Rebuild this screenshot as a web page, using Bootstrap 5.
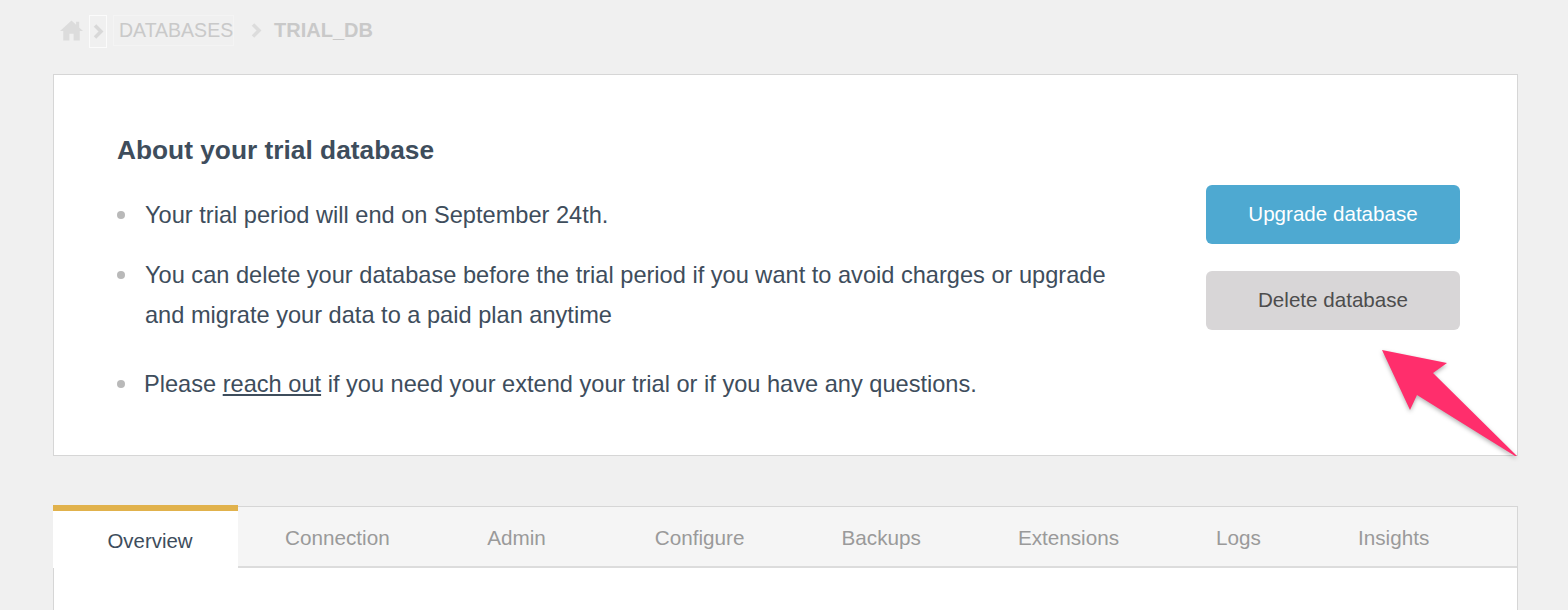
<!DOCTYPE html>
<html lang="en">
<head>
  <meta charset="UTF-8">
  <meta name="viewport" content="width=device-width, initial-scale=1.0">
  <title>Trial database</title>
  <link href="https://cdn.jsdelivr.net/npm/bootstrap@5.3.0/dist/css/bootstrap.min.css" rel="stylesheet">
  <style>
    html, body { height: 610px; overflow: hidden; }
    body {
      background: #f0f0f0;
      font-family: "Liberation Sans", Arial, sans-serif;
      color: #3e4d5c;
      position: relative;
    }
    .page-wrap { padding: 0 50px 0 53px; }
    .crumbs { height: 74px; padding: 15px 0 0 7px; color: #c9c9c9; font-size: 20px; }
    .crumbs .home-icon { width: 23px; height: 22px; margin-top: 4px; }
    .crumb-sep { width: 18px; height: 33px; border: 1px solid #fbfbfb; display: flex; align-items: center; justify-content: center; margin: 0 6px 0 6px; }
    .crumb-link { height: 31px; width: 121px; border: 1px solid #f4f4f4; line-height: 29px; padding-left: 5px; font-size: 19.5px; }
    .crumb-sep2 { margin: 0 12px 0 17px; display: flex; align-items: center; height: 31px; }
    .crumb-now { font-weight: 700; line-height: 30px; }
    .about-box {
      background: #fff;
      border: 1px solid #d6d6d6;
      height: 382px;
      padding: 59px 57px 0 63px;
    }
    .about-box h2 { font-size: 26.3px; font-weight: 700; line-height: 32px; margin-bottom: 29px; color: #3e4d5c; }
    .about-list { list-style: none; margin: 0; padding: 0; width: 1010px; font-size: 23.6px; line-height: 40px; }
    .about-list li { position: relative; padding-left: 28px; margin-bottom: 20px; }
    .about-list li:last-child { margin-top: 29px; margin-bottom: 0; padding-left: 27px; }
    .about-list li::before { content: ""; position: absolute; left: 0; top: 16px; width: 8px; height: 8px; border-radius: 50%; background: #b9b9b9; }
    .about-list a { color: #3e4d5c; }
    .side-btns { width: 254px; padding-top: 51px; gap: 27.5px; }
    .btn-up, .btn-del { height: 58.5px; font-size: 20.6px; border-radius: 6px; border: 0; line-height: 58px; padding: 0; }
    .btn-up { background: #4ea9d1; color: #fff; }
    .btn-del { background: #d8d6d7; color: #4d4d4d; }
    .tab-box {
      margin-top: 50px;
      background: #fff;
      border: 1px solid #d6d6d6;
      border-bottom: 0;
      height: 110px;
    }
    .tab-strip { height: 61px; background: #f5f5f5; border-bottom: 2px solid #dcdcdc; font-size: 20.7px; }
    .tab-item { color: #9a9a9a; padding: 0 48.5px; line-height: 62px; height: 59px; display: block; text-decoration: none; }
    .tab-item.now {
      background: #fff; color: #3e4d5c; width: 185px; height: 63px; padding: 0 0 0 9px; text-align: center; font-size: 20.4px;
      margin: -2px 0 0 -1px; border-top: 6px solid #e1b24c; line-height: 60px;
    }
    .tab-first { margin-left: -1.5px; }
    .tab-admin { margin-left: 0.5px; padding-right: 60.5px; }
    .big-arrow { position: absolute; left: 1370px; top: 340px; width: 160px; height: 125px; overflow: visible; filter: drop-shadow(0 2px 2px rgba(0,0,0,.3)); }
  </style>
</head>
<body>
<div class="page-wrap">
  <nav class="crumbs d-flex align-items-start">
    <svg class="home-icon" viewBox="0 0 24 22"><path fill="#dcdcdc" d="M12 1 0 12h3.400v10h6.400v-7h4.400v7h6.400V12H24l-4-3.700V2.500h-3.200v3.100z"/></svg>
    <span class="crumb-sep"><svg width="11" height="15" viewBox="0 0 11 15"><path fill="none" stroke="#d8d8d8" stroke-width="3.500" d="m2 1.500 6 6-6 6"/></svg></span>
    <span class="crumb-link">DATABASES</span>
    <span class="crumb-sep2"><svg width="11" height="15" viewBox="0 0 11 15"><path fill="none" stroke="#dcdcdc" stroke-width="3.500" d="m2 1.500 6 6-6 6"/></svg></span>
    <span class="crumb-now">TRIAL_DB</span>
  </nav>

  <section class="about-box d-flex justify-content-between">
    <div>
      <h2>About your trial database</h2>
      <ul class="about-list">
        <li>Your trial period will end on September 24th.</li>
        <li>You can delete your database before the trial period if you want to avoid charges or upgrade and migrate your data to a paid plan anytime</li>
        <li>Please <a href="#">reach out</a> if you need your extend your trial or if you have any questions.</li>
      </ul>
    </div>
    <div class="side-btns d-flex flex-column">
      <a href="#" class="btn btn-up">Upgrade database</a>
      <a href="#" class="btn btn-del">Delete database</a>
    </div>
  </section>

  <section class="tab-box">
    <div class="tab-strip d-flex">
      <a href="#" class="tab-item now">Overview</a>
      <a href="#" class="tab-item tab-first">Connection</a>
      <a href="#" class="tab-item tab-admin">Admin</a>
      <a href="#" class="tab-item">Configure</a>
      <a href="#" class="tab-item">Backups</a>
      <a href="#" class="tab-item">Extensions</a>
      <a href="#" class="tab-item">Logs</a>
      <a href="#" class="tab-item">Insights</a>
    </div>
  </section>
</div>

<svg class="big-arrow" viewBox="0 0 160 125"><polygon fill="#ff2e6c" points="12,10 77,23 63,33 147,116 145,116 47,55 40,70"/></svg>

<script src="https://cdn.jsdelivr.net/npm/bootstrap@5.3.0/dist/js/bootstrap.bundle.min.js"></script>
</body>
</html>
